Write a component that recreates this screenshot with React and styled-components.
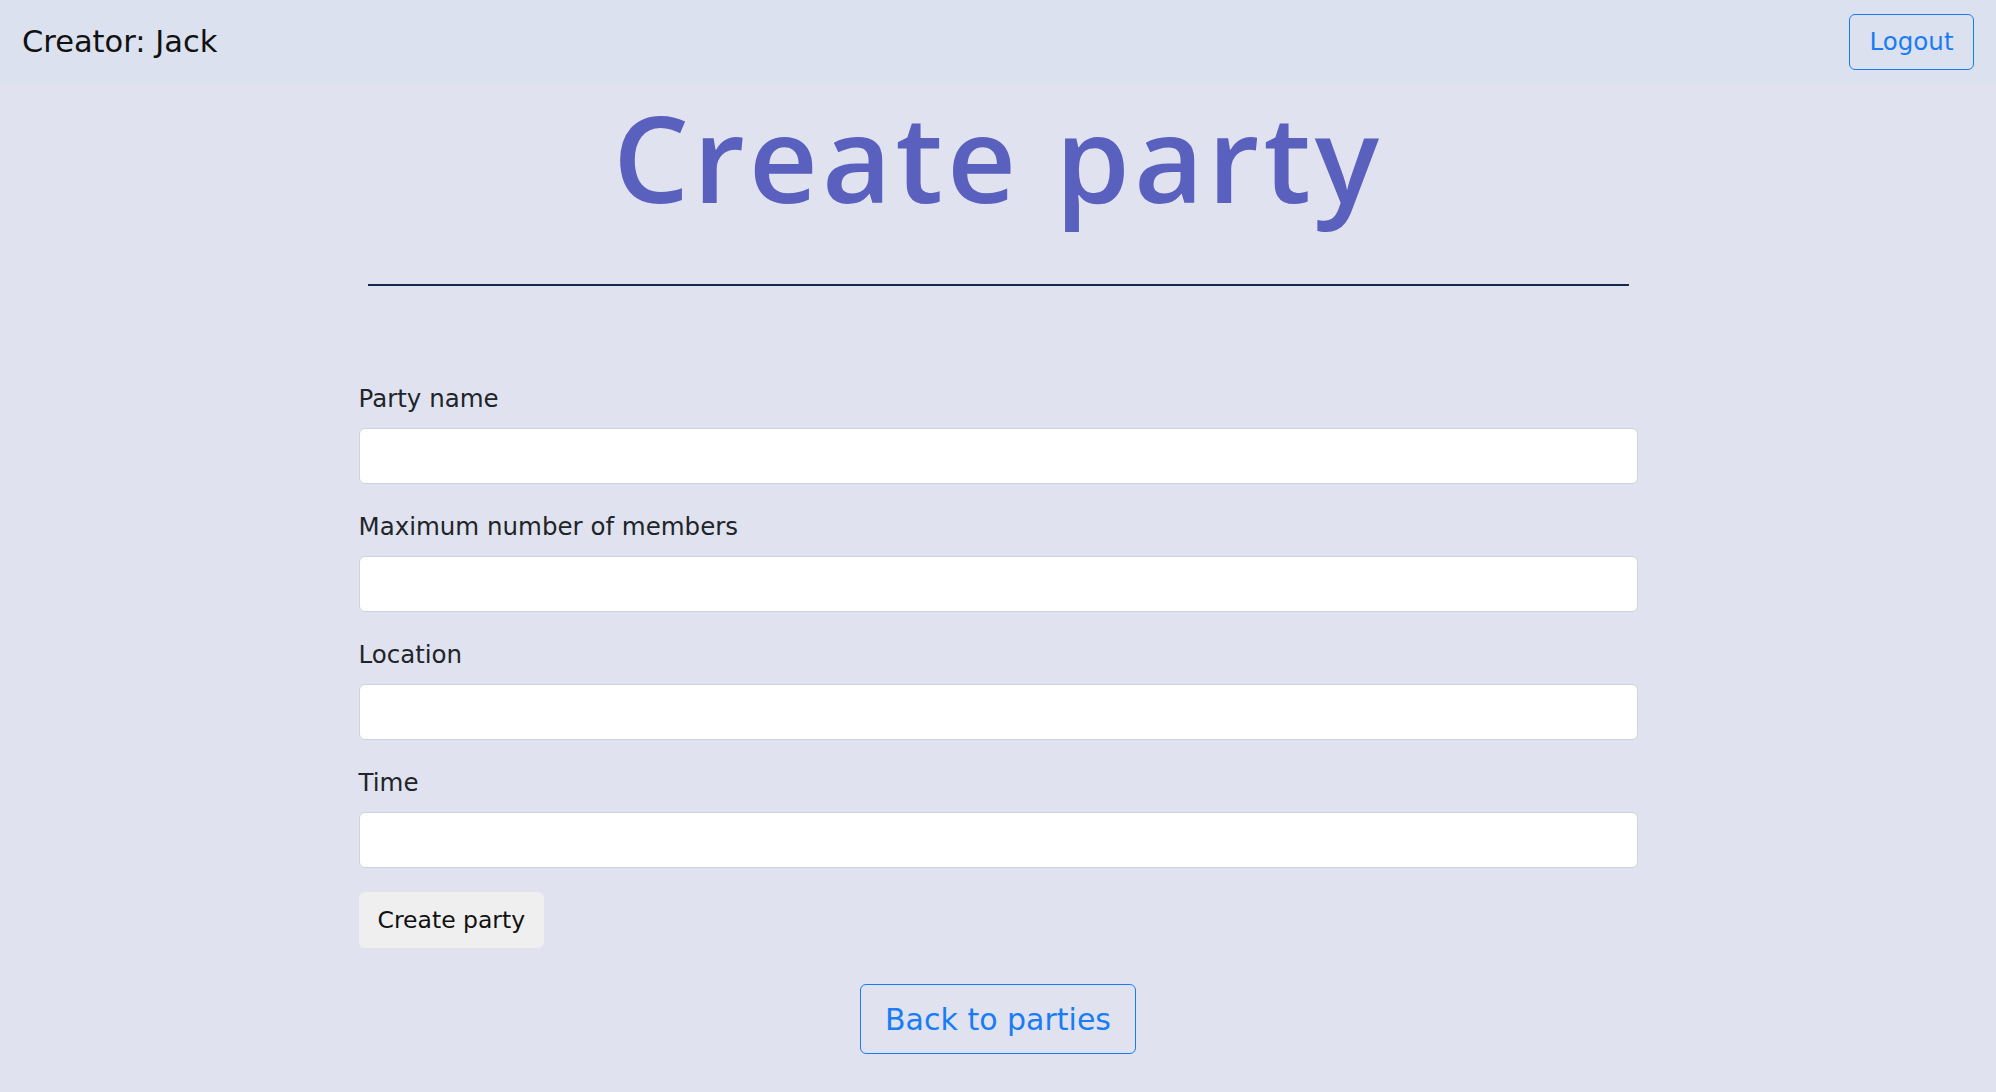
import React from "react";
import styled, { createGlobalStyle } from "styled-components";

const GlobalStyle = createGlobalStyle`
  html, body {
    margin: 0;
    padding: 0;
  }
  body {
    background: #e0e3ef;
    font-family: "DejaVu Sans", "Open Sans", sans-serif;
    color: #212529;
  }
  * {
    box-sizing: border-box;
  }
`;

const Page = styled.div`
  min-height: 1092px;
  background: #e0e3ef;
`;

const TopBar = styled.header`
  height: 83px;
  background: #dbe1ee;
  display: flex;
  align-items: center;
  justify-content: space-between;
  padding: 0 22px;
`;

const Creator = styled.div`
  font-size: 30.5px;
  color: #111;
`;

const OutlineButton = styled.button`
  background: transparent;
  border: 1px solid #1a7cf5;
  color: #1a7cf5;
  border-radius: 6px;
  font-family: inherit;
  font-size: ${(p) => (p.$large ? "30px" : "24.5px")};
  height: ${(p) => (p.$large ? "70px" : "56px")};
  padding: ${(p) => (p.$large ? "0 24px" : "0 19.5px")};
  cursor: pointer;
`;

const Main = styled.main`
  width: 1279px;
  margin: 0 auto;
  display: flex;
  flex-direction: column;
`;

const Title = styled.h1`
  font-family: "Open Sans", sans-serif;
  font-weight: 600;
  font-size: 120px;
  line-height: 1;
  letter-spacing: 4px;
  color: #5a60be;
  text-align: center;
  margin: 14px 0 0;
`;

const Rule = styled.hr`
  border: none;
  height: 2px;
  background: #13294b;
  margin: 67px 9px 0;
`;

const Form = styled.form`
  margin-top: 96px;
  display: flex;
  flex-direction: column;
`;

const Field = styled.div`
  display: flex;
  flex-direction: column;
  margin-bottom: 26px;
`;

const Label = styled.label`
  font-size: 24.5px;
  line-height: 34px;
  margin-bottom: 12px;
`;

const Input = styled.input`
  height: 56px;
  width: 100%;
  background: #fff;
  border: 1px solid #ced4da;
  border-radius: 6px;
  font-size: 24px;
  padding: 0 16px;
`;

const SubmitButton = styled.button`
  align-self: flex-start;
  margin-top: -2px;
  height: 56px;
  padding: 0 19px;
  background: #efefef;
  border: none;
  border-radius: 6px;
  font-family: inherit;
  font-size: 23.5px;
  color: #111;
  cursor: pointer;
`;

const Footer = styled.div`
  display: flex;
  justify-content: center;
  margin-top: 36px;
`;

const fields = [
  { id: "name", label: "Party name" },
  { id: "members", label: "Maximum number of members" },
  { id: "location", label: "Location" },
  { id: "time", label: "Time" },
];

const App = () => {
  return (
    <>
      <GlobalStyle />
      <Page>
        <TopBar>
          <Creator>Creator: Jack</Creator>
          <OutlineButton>Logout</OutlineButton>
        </TopBar>
        <Main>
          <Title>Create party</Title>
          <Rule />
          <Form onSubmit={(e) => e.preventDefault()}>
            {fields.map((f) => (
              <Field key={f.id}>
                <Label htmlFor={f.id}>{f.label}</Label>
                <Input id={f.id} />
              </Field>
            ))}
            <SubmitButton type="submit">Create party</SubmitButton>
          </Form>
          <Footer>
            <OutlineButton $large>Back to parties</OutlineButton>
          </Footer>
        </Main>
      </Page>
    </>
  );
};

export default App;
